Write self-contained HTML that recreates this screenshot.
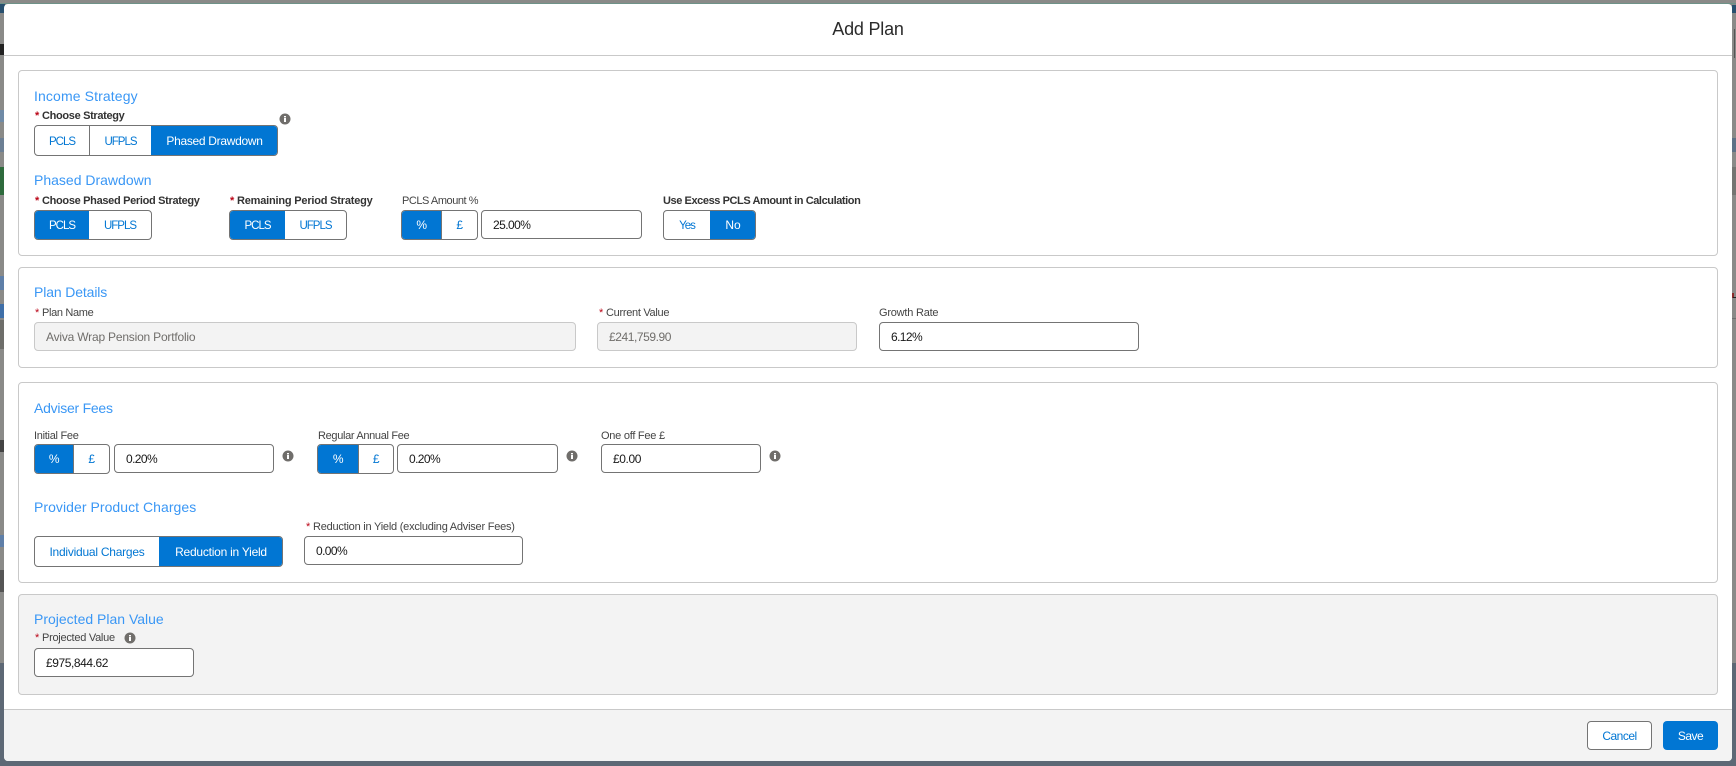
<!DOCTYPE html>
<html lang="en">
<head>
<meta charset="utf-8">
<title>Add Plan</title>
<style>
html,body{margin:0;padding:0;width:1736px;height:766px;overflow:hidden;background:#8a8a88;font-family:"Liberation Sans",Arial,sans-serif;color:#181818}
*{box-sizing:border-box}
.abs,.t,.h,.l,.b,.inp,.grp,.card,.ic,.bar{position:absolute}
.bar{display:block}
#modal{position:absolute;left:4px;top:4px;width:1728px;height:757px;background:#fff;border-radius:4px;overflow:hidden}
#layer{position:absolute;left:0;top:0;width:1736px;height:766px}
.card{border:1px solid #c9c9c9;border-radius:4px;left:18px;width:1700px;background:#fff}
.h{font-size:14px;line-height:20px;height:20px;color:#3a97f5;white-space:nowrap;left:34px}
.l{font-size:11px;line-height:16px;height:16px;color:#444;white-space:nowrap}
.l.s{font-weight:bold;color:#333}
.l i{position:absolute;left:-7px;top:0;font-style:normal;color:#ba0517;letter-spacing:0}
.grp{border:1px solid #747474;border-radius:4px;background:#fff;overflow:hidden;display:flex;font-size:12px;letter-spacing:-.3px}
.grp span{display:flex;align-items:center;justify-content:center;color:#0176d3;height:100%;border-left:1px solid #747474}
.grp span:first-child{border-left:0}
.grp span.on{background:#0176d3;color:#fff;border-left-color:#0176d3}
.grp span.c{font-size:11.5px;letter-spacing:-1px;padding-top:2px}
.inp{border:1px solid #747474;border-radius:4px;background:#fff;font-size:12px;color:#181818;padding-left:11px;display:flex;align-items:center;white-space:nowrap;letter-spacing:-.5px}
.inp.dis{background:#f3f3f3;border-color:#c9c9c9;color:#706e6b}
.ic{width:12px;height:12px}
.b{border-radius:4px;font-size:12px;display:flex;align-items:center;justify-content:center;letter-spacing:-.5px}
</style>
</head>
<body>
<!-- backdrop remnants -->
<div class="bar" style="left:0;top:663px;width:1736px;height:103px;background:#5d6875"></div>
<div class="bar" style="left:0;top:3px;width:1736px;height:1px;background:#6e9288"></div>
<div class="bar" style="left:0;top:4px;width:5px;height:9px;background:#28506f"></div>
<div class="bar" style="left:1732px;top:5px;width:4px;height:8px;background:#28506f"></div>
<div class="bar" style="left:0;top:44px;width:4px;height:11px;background:#222"></div>
<div class="bar" style="left:0;top:138px;width:4px;height:14px;background:#6c7f94"></div>
<div class="bar" style="left:0;top:167px;width:4px;height:28px;background:#2e6b3d"></div>
<div class="bar" style="left:0;top:320px;width:4px;height:29px;background:#6e6e6a"></div>
<div class="bar" style="left:0;top:110px;width:4px;height:12px;background:#6f8aa6"></div>
<div class="bar" style="left:0;top:276px;width:4px;height:14px;background:#5f7fa8"></div>
<div class="bar" style="left:0;top:304px;width:4px;height:14px;background:#3f6fa8"></div>
<div class="bar" style="left:0;top:440px;width:4px;height:12px;background:#444"></div>
<div class="bar" style="left:0;top:535px;width:4px;height:12px;background:#5f7fa8"></div>
<div class="bar" style="left:0;top:570px;width:4px;height:22px;background:#555"></div>
<div class="bar" style="left:1734px;top:29px;width:1px;height:29px;background:#555"></div>
<div class="bar" style="left:1732px;top:138px;width:4px;height:14px;background:#5e7186"></div>
<div class="bar" style="left:1732px;top:167px;width:4px;height:28px;background:#757572"></div>
<div class="bar" style="left:1732px;top:293px;width:2px;height:5px;background:#8a2a2a"></div>
<div class="bar" style="left:1733px;top:297px;width:3px;height:1px;background:#222"></div>
<div class="bar" style="left:1732px;top:318px;width:4px;height:1px;background:#6f6f6f"></div>

<div id="modal"></div>
<div id="layer">
  <!-- header -->
  <div class="abs" style="left:4px;top:55px;width:1728px;height:1px;background:#c9c9c9"></div>
  <div class="abs" style="left:4px;top:17px;width:1728px;height:24px;line-height:24px;text-align:center;font-size:18px;letter-spacing:-.2px;color:#2b2b2b">Add Plan</div>

  <!-- card 1 -->
  <div class="card" style="top:70px;height:186px"></div>
  <div class="h" style="top:86px;letter-spacing:.12px">Income Strategy</div>
  <div class="l s" style="left:42px;top:108px;letter-spacing:-.33px"><i>*</i>Choose Strategy</div>
  <svg class="ic" style="left:279px;top:113px" viewBox="0 0 12 12"><circle cx="6" cy="6" r="5.5" fill="#706e6b"/><rect x="5" y="5" width="2" height="4" fill="#fff"/><rect x="5" y="3" width="2" height="1.4" fill="#fff"/></svg>
  <div class="grp" style="left:34px;top:125px;width:244px;height:31px">
    <span class="c" style="width:54px">PCLS</span><span class="c" style="width:62px">UFPLS</span><span class="on" style="flex:1">Phased Drawdown</span>
  </div>
  <div class="h" style="top:170px">Phased Drawdown</div>
  <div class="l s" style="left:42px;top:193px;letter-spacing:-.32px"><i>*</i>Choose Phased Period Strategy</div>
  <div class="grp" style="left:34px;top:210px;width:118px;height:30px">
    <span class="on c" style="width:54px">PCLS</span><span class="c" style="flex:1;border-left:0">UFPLS</span>
  </div>
  <div class="l s" style="left:237px;top:193px;letter-spacing:-.2px"><i>*</i>Remaining Period Strategy</div>
  <div class="grp" style="left:229px;top:210px;width:118px;height:30px">
    <span class="on c" style="width:55px">PCLS</span><span class="c" style="flex:1;border-left:0">UFPLS</span>
  </div>
  <div class="l" style="left:402px;top:193px;letter-spacing:-.45px">PCLS Amount %</div>
  <div class="grp" style="left:401px;top:210px;width:77px;height:30px">
    <span class="on" style="width:39px">%</span><span style="flex:1;border-left:1px solid #747474">£</span>
  </div>
  <div class="inp" style="left:481px;top:210px;width:161px;height:29px;letter-spacing:-.55px">25.00%</div>
  <div class="l s" style="left:663px;top:193px;letter-spacing:-.42px">Use Excess PCLS Amount in Calculation</div>
  <div class="grp" style="left:663px;top:210px;width:93px;height:30px">
    <span class="c" style="width:46px">Yes</span><span class="on" style="flex:1;letter-spacing:0">No</span>
  </div>

  <!-- card 2 -->
  <div class="card" style="top:267px;height:101px"></div>
  <div class="h" style="top:282px;letter-spacing:-.13px">Plan Details</div>
  <div class="l" style="left:42px;top:305px;letter-spacing:-.34px"><i>*</i>Plan Name</div>
  <div class="inp dis" style="left:34px;top:322px;width:542px;height:29px;letter-spacing:-.2px">Aviva Wrap Pension Portfolio</div>
  <div class="l" style="left:606px;top:305px;letter-spacing:-.3px"><i>*</i>Current Value</div>
  <div class="inp dis" style="left:597px;top:322px;width:260px;height:29px;letter-spacing:-.43px">£241,759.90</div>
  <div class="l" style="left:879px;top:305px;letter-spacing:-.22px">Growth Rate</div>
  <div class="inp" style="left:879px;top:322px;width:260px;height:29px;letter-spacing:-.6px">6.12%</div>

  <!-- card 3 -->
  <div class="card" style="top:382px;height:201px"></div>
  <div class="h" style="top:398px;letter-spacing:-.25px">Adviser Fees</div>
  <div class="l" style="left:34px;top:428px;letter-spacing:-.28px">Initial Fee</div>
  <div class="grp" style="left:34px;top:444px;width:76px;height:30px">
    <span class="on" style="width:38px">%</span><span style="flex:1;border-left:1px solid #747474">£</span>
  </div>
  <div class="inp" style="left:114px;top:444px;width:160px;height:29px;letter-spacing:-.6px">0.20%</div>
  <svg class="ic" style="left:282px;top:450px" viewBox="0 0 12 12"><circle cx="6" cy="6" r="5.5" fill="#706e6b"/><rect x="5" y="5" width="2" height="4" fill="#fff"/><rect x="5" y="3" width="2" height="1.4" fill="#fff"/></svg>
  <div class="l" style="left:318px;top:428px;letter-spacing:-.33px">Regular Annual Fee</div>
  <div class="grp" style="left:317px;top:444px;width:77px;height:30px">
    <span class="on" style="width:40px">%</span><span style="flex:1;border-left:1px solid #747474">£</span>
  </div>
  <div class="inp" style="left:397px;top:444px;width:161px;height:29px;letter-spacing:-.6px">0.20%</div>
  <svg class="ic" style="left:566px;top:450px" viewBox="0 0 12 12"><circle cx="6" cy="6" r="5.5" fill="#706e6b"/><rect x="5" y="5" width="2" height="4" fill="#fff"/><rect x="5" y="3" width="2" height="1.4" fill="#fff"/></svg>
  <div class="l" style="left:601px;top:428px;letter-spacing:-.25px">One off Fee £</div>
  <div class="inp" style="left:601px;top:444px;width:160px;height:29px;letter-spacing:-.4px">£0.00</div>
  <svg class="ic" style="left:769px;top:450px" viewBox="0 0 12 12"><circle cx="6" cy="6" r="5.5" fill="#706e6b"/><rect x="5" y="5" width="2" height="4" fill="#fff"/><rect x="5" y="3" width="2" height="1.4" fill="#fff"/></svg>
  <div class="h" style="top:497px;letter-spacing:.05px">Provider Product Charges</div>
  <div class="l" style="left:313px;top:519px;letter-spacing:-.23px"><i>*</i>Reduction in Yield (excluding Adviser Fees)</div>
  <div class="grp" style="left:34px;top:536px;width:249px;height:31px;letter-spacing:-.24px">
    <span style="width:124px">Individual Charges</span><span class="on" style="flex:1">Reduction in Yield</span>
  </div>
  <div class="inp" style="left:304px;top:536px;width:219px;height:29px;letter-spacing:-.6px">0.00%</div>

  <!-- card 4 -->
  <div class="card" style="top:594px;height:101px;background:#f3f3f3"></div>
  <div class="h" style="top:609px">Projected Plan Value</div>
  <div class="l" style="left:42px;top:630px;letter-spacing:-.27px"><i>*</i>Projected Value</div>
  <svg class="ic" style="left:124px;top:632px" viewBox="0 0 12 12"><circle cx="6" cy="6" r="5.5" fill="#706e6b"/><rect x="5" y="5" width="2" height="4" fill="#fff"/><rect x="5" y="3" width="2" height="1.4" fill="#fff"/></svg>
  <div class="inp" style="left:34px;top:648px;width:160px;height:29px;letter-spacing:-.43px">£975,844.62</div>

  <!-- footer -->
  <div class="abs" style="left:4px;top:709px;width:1728px;height:52px;background:#f3f3f3;border-top:1px solid #c9c9c9;border-radius:0 0 4px 4px"></div>
  <div class="b" style="left:1587px;top:721px;width:65px;height:29px;background:#fff;border:1px solid #747474;color:#0176d3">Cancel</div>
  <div class="b" style="left:1663px;top:721px;width:55px;height:29px;background:#0176d3;color:#fff">Save</div>
</div>
</body>
</html>
